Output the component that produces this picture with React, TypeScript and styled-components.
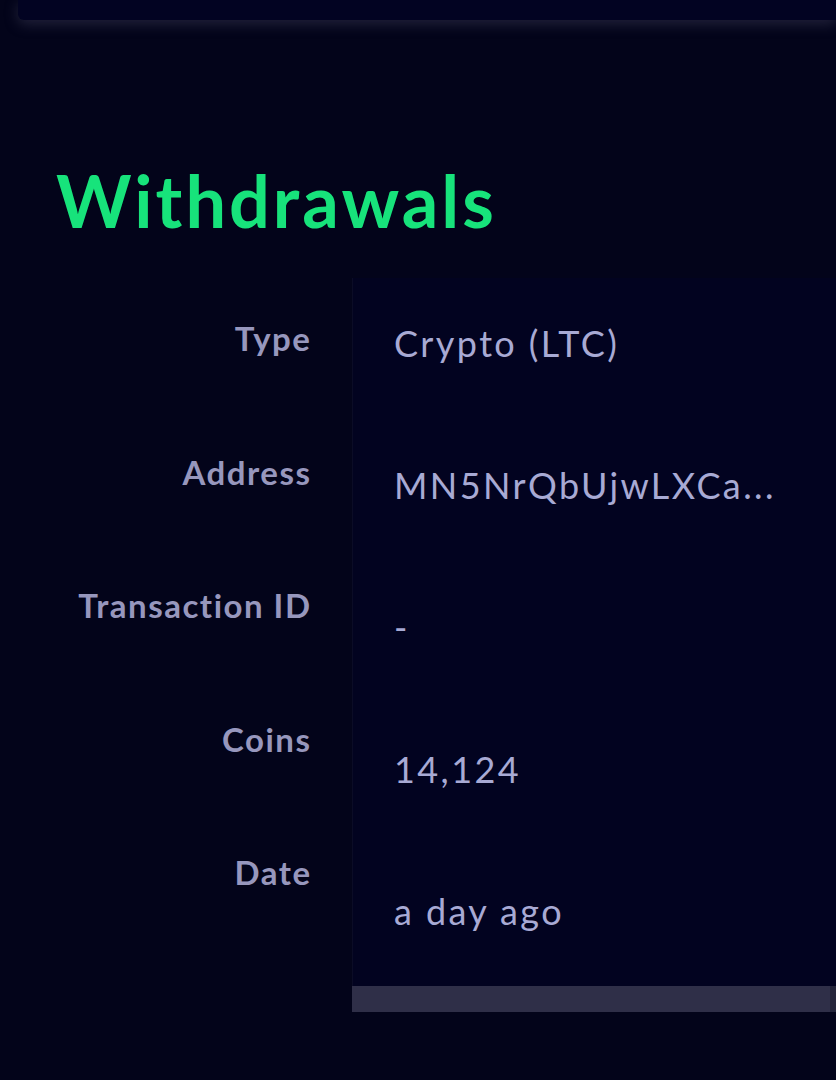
import React from "react";
import styled, { createGlobalStyle } from "styled-components";

const Global = createGlobalStyle`
  html, body {
    margin: 0;
    padding: 0;
    background: #03041a;
    overflow: hidden;
  }
  body {
    font-family: "Lato", "Noto Sans", sans-serif;
  }
`;

const Page = styled.div`
  width: 836px;
  height: 1080px;
  background: #03041a;
  overflow: hidden;
  display: flex;
  flex-direction: column;
`;

const TopCard = styled.div`
  margin-left: 18px;
  height: 20px;
  flex-shrink: 0;
  background: #020322;
  border-bottom-left-radius: 6px;
  box-shadow: 0 4px 14px rgba(70, 70, 100, 0.45);
`;

const Heading = styled.h1`
  margin: 145px 0 0 56px;
  font-family: "Lato", sans-serif;
  font-weight: 700;
  font-size: 72px;
  line-height: 71px;
  color: #17e37b;
  letter-spacing: 3px;
  flex-shrink: 0;
`;

const Table = styled.div`
  margin-top: 42px;
  display: flex;
  align-items: flex-start;
  flex-shrink: 0;
`;

const LabelCol = styled.div`
  width: 311.5px;
  margin-right: -1.5px;
  height: 668px;
  padding-top: 44px;
  box-sizing: border-box;
  overflow: hidden;
  display: flex;
  flex-direction: column;
  align-items: flex-end;
`;

const Label = styled.div`
  height: 133.5px;
  flex-shrink: 0;
  font-family: "Lato", sans-serif;
  font-weight: 700;
  font-size: 33px;
  line-height: 1;
  letter-spacing: 1.5px;
  color: #9797bd;
  white-space: nowrap;
`;

const ValueArea = styled.div`
  margin-left: 42px;
  flex: 1;
  display: flex;
  flex-direction: column;
`;

const Panel = styled.div`
  height: 708px;
  background: #020320;
  border-left: 1px solid #0b0c26;
  padding: 47px 0 0 41px;
  box-sizing: border-box;
  overflow: hidden;
  display: flex;
  flex-direction: column;
`;

const Value = styled.div`
  height: 142px;
  flex-shrink: 0;
  font-family: "Lato", sans-serif;
  font-weight: 400;
  font-size: 36px;
  line-height: 1;
  letter-spacing: 2.4px;
  color: #a8aad4;
  white-space: nowrap;
`;

const ScrollTrack = styled.div`
  height: 26px;
  background: #24253a;
  display: flex;
`;

const ScrollThumb = styled.div`
  flex: 1;
  margin-right: 6px;
  background: #2f2f48;
`;

const rows = [
  { label: "Type", value: "Crypto (LTC)" },
  { label: "Address", value: "MN5NrQbUjwLXCa..." },
  { label: "Transaction ID", value: "-" },
  { label: "Coins", value: "14,124" },
  { label: "Date", value: "a day ago" },
];

export default function App() {
  return (
    <Page>
      <Global />
      <TopCard />
      <Heading>Withdrawals</Heading>
      <Table>
        <LabelCol>
          {rows.map((r) => (
            <Label key={r.label}>{r.label}</Label>
          ))}
        </LabelCol>
        <ValueArea>
          <Panel>
            {rows.map((r) => (
              <Value key={r.label}>{r.value}</Value>
            ))}
          </Panel>
          <ScrollTrack>
            <ScrollThumb />
          </ScrollTrack>
        </ValueArea>
      </Table>
    </Page>
  );
}
